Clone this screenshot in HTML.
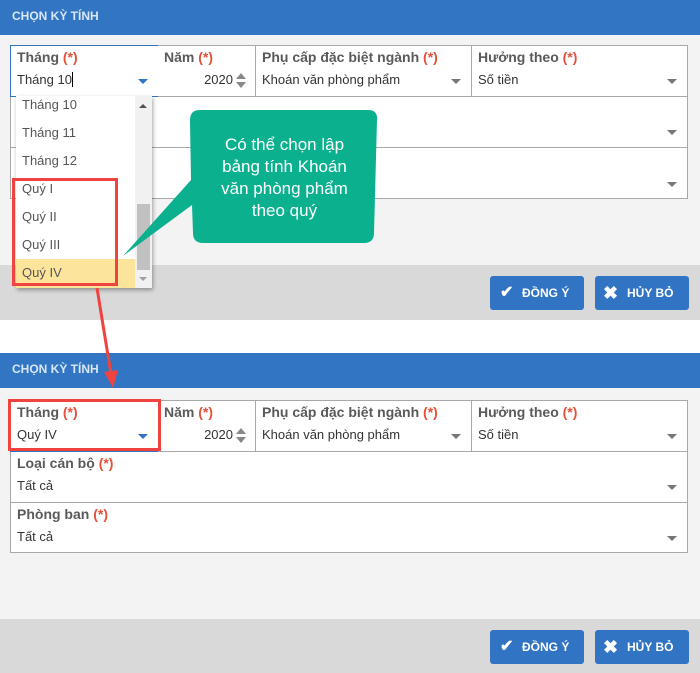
<!DOCTYPE html>
<html><head><meta charset="utf-8"><style>
*{box-sizing:border-box;margin:0;padding:0}
body{width:700px;height:673px;position:relative;background:#fff;font-family:"Liberation Sans",sans-serif;overflow:hidden}
.a{position:absolute}
.hdr{background:#3175c3;color:#d9e6f5;font-size:12px;font-weight:bold;padding-left:12px}
.body{background:#f3f3f3}
.foot{background:#d9d9d9}
.cell{position:absolute;border:1px solid #a8a8a8;background:#fff}
.lbl{position:absolute;left:6px;top:3px;font-size:14px;font-weight:bold;color:#5a5a5a}
.lbl span{color:#e4503a}
.val{position:absolute;left:6px;top:26px;font-size:13px;color:#333}
.tri{position:absolute;width:0;height:0;border-left:5px solid transparent;border-right:5px solid transparent;border-top:5px solid #777}
.tri.b{border-top-color:#2f74c5}
.btn{position:absolute;background:#3174c4;border-radius:3px;color:#fff;font-size:12px;font-weight:bold;width:94px;height:34px;line-height:34px}
.item{position:absolute;left:6px;font-size:13px;color:#555}
</style></head><body>

<div class="a hdr" style="left:0;top:0;width:700px;height:35px;line-height:33px">CHỌN KỲ TÍNH</div>
<div class="a body" style="left:0;top:35px;width:700px;height:230px"></div>
<div class="a foot" style="left:0;top:265px;width:700px;height:55px"></div>

<div class="cell" style="left:10px;top:45px;width:678px;height:52px"></div>
<div class="cell" style="left:10px;top:96px;width:678px;height:52px"><div class="tri" style="right:10px;top:33px"></div></div>
<div class="cell" style="left:10px;top:147px;width:678px;height:52px"><div class="tri" style="right:10px;top:34px"></div></div>

<div class="cell" style="left:10px;top:45px;width:149px;height:52px;border-color:#3174c4"><div class="lbl">Tháng <span>(*)</span></div><div class="val">Tháng 10<span style="display:inline-block;width:1px;height:15px;background:#000;vertical-align:-3px"></span></div><div class="tri b" style="right:10px;top:33px"></div></div>
<div class="cell" style="left:158px;top:45px;width:98px;height:52px;border-left:none"><div class="lbl">Năm <span>(*)</span></div><div class="val" style="left:auto;right:22px">2020</div>
<div class="a" style="right:9px;top:27px;border-left:5px solid transparent;border-right:5px solid transparent;border-bottom:6px solid #888"></div>
<div class="a" style="right:9px;top:36px;border-left:5px solid transparent;border-right:5px solid transparent;border-top:6px solid #888"></div></div>
<div class="cell" style="left:255px;top:45px;width:217px;height:52px"><div class="lbl">Phụ cấp đặc biệt ngành <span>(*)</span></div><div class="val">Khoán văn phòng phẩm</div><div class="tri" style="right:10px;top:33px"></div></div>
<div class="cell" style="left:471px;top:45px;width:217px;height:52px"><div class="lbl">Hưởng theo <span>(*)</span></div><div class="val">Số tiền</div><div class="tri" style="right:10px;top:33px"></div></div>

<div class="btn" style="left:490px;top:276px"><span style="position:absolute;left:10px;font-size:16px">✔</span><span style="position:absolute;left:32px">ĐỒNG Ý</span></div>
<div class="btn" style="left:595px;top:276px"><span style="position:absolute;left:8px;font-size:18px">✖</span><span style="position:absolute;left:32px">HỦY BỎ</span></div>

<div class="a" style="left:16px;top:96px;width:136px;height:192px;background:#fff;box-shadow:1px 2px 4px rgba(0,0,0,.35);overflow:hidden">
 <div class="item" style="top:1px">Tháng 10</div>
 <div class="item" style="top:29px">Tháng 11</div>
 <div class="item" style="top:57px">Tháng 12</div>
 <div class="item" style="top:85px">Quý I</div>
 <div class="item" style="top:113px">Quý II</div>
 <div class="item" style="top:141px">Quý III</div>
 <div class="a" style="left:0;top:163px;width:119px;height:29px;background:#fde49b"></div>
 <div class="item" style="top:169px">Quý IV</div>
 <div class="a" style="left:119px;top:0;width:17px;height:192px;background:#f1f1f1"></div>
 <div class="a" style="left:121px;top:108px;width:13px;height:66px;background:#c1c1c1"></div>
 <div class="a" style="left:123px;top:8px;border-left:4px solid transparent;border-right:4px solid transparent;border-bottom:4px solid #505050"></div>
 <div class="a" style="left:123px;top:181px;border-left:4px solid transparent;border-right:4px solid transparent;border-top:4px solid #a0a0a0"></div>
</div>
<div class="a" style="left:12px;top:178px;width:106px;height:108px;border:3px solid #f0433f"></div>

<svg class="a" style="left:0;top:0" width="700" height="300">
 <path d="M200 110 H368 Q378 110 377 120 L374 233 Q374 243 364 243 H203 Q193 243 193 233 L192 205 L123 256 L191 180 L190 120 Q190 110 200 110 Z" fill="#0bb08f"/>
</svg>
<div class="a" style="left:192px;top:134px;width:185px;text-align:center;color:#fff;font-size:17px;line-height:22px">Có thể chọn lập<br>bảng tính Khoán<br>văn phòng phẩm<br>theo quý</div>

<div class="a hdr" style="left:0;top:353px;width:700px;height:35px;line-height:33px">CHỌN KỲ TÍNH</div>
<div class="a body" style="left:0;top:388px;width:700px;height:231px"></div>
<div class="a foot" style="left:0;top:619px;width:700px;height:54px"></div>

<div class="cell" style="left:10px;top:400px;width:678px;height:52px"></div>
<div class="cell" style="left:10px;top:451px;width:678px;height:52px"><div class="lbl">Loại cán bộ <span>(*)</span></div><div class="val">Tất cả</div><div class="tri" style="right:10px;top:33px"></div></div>
<div class="cell" style="left:10px;top:502px;width:678px;height:51px"><div class="lbl">Phòng ban <span>(*)</span></div><div class="val">Tất cả</div><div class="tri" style="right:10px;top:33px"></div></div>

<div class="cell" style="left:10px;top:400px;width:149px;height:52px;border-color:#3174c4"><div class="lbl">Tháng <span>(*)</span></div><div class="val">Quý IV</div><div class="tri b" style="right:10px;top:33px"></div></div>
<div class="cell" style="left:158px;top:400px;width:98px;height:52px;border-left:none"><div class="lbl">Năm <span>(*)</span></div><div class="val" style="left:auto;right:22px">2020</div>
<div class="a" style="right:9px;top:27px;border-left:5px solid transparent;border-right:5px solid transparent;border-bottom:6px solid #888"></div>
<div class="a" style="right:9px;top:36px;border-left:5px solid transparent;border-right:5px solid transparent;border-top:6px solid #888"></div></div>
<div class="cell" style="left:255px;top:400px;width:217px;height:52px"><div class="lbl">Phụ cấp đặc biệt ngành <span>(*)</span></div><div class="val">Khoán văn phòng phẩm</div><div class="tri" style="right:10px;top:33px"></div></div>
<div class="cell" style="left:471px;top:400px;width:217px;height:52px"><div class="lbl">Hưởng theo <span>(*)</span></div><div class="val">Số tiền</div><div class="tri" style="right:10px;top:33px"></div></div>
<div class="a" style="left:8px;top:399px;width:153px;height:52px;border:3px solid #f0433f"></div>

<div class="btn" style="left:490px;top:630px"><span style="position:absolute;left:10px;font-size:16px">✔</span><span style="position:absolute;left:32px">ĐỒNG Ý</span></div>
<div class="btn" style="left:595px;top:630px"><span style="position:absolute;left:8px;font-size:18px">✖</span><span style="position:absolute;left:32px">HỦY BỎ</span></div>

<svg class="a" style="left:0;top:0" width="700" height="400">
 <line x1="97" y1="288" x2="111" y2="374" stroke="#f0433f" stroke-width="3"/>
 <path d="M104 372 L118 370 L113 388 Z" fill="#f0433f"/>
</svg>
</body></html>
